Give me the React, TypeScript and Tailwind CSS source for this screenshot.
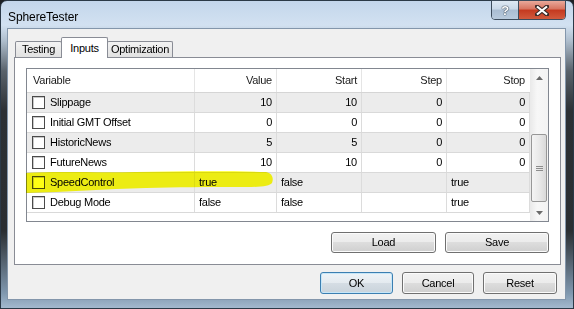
import type { ReactNode } from 'react'

type Row = {
  name: string
  value: string
  start: string
  step: string
  stop: string
  num: boolean
}

const rows: Row[] = [
  { name: 'Slippage', value: '10', start: '10', step: '0', stop: '0', num: true },
  { name: 'Initial GMT Offset', value: '0', start: '0', step: '0', stop: '0', num: true },
  { name: 'HistoricNews', value: '5', start: '5', step: '0', stop: '0', num: true },
  { name: 'FutureNews', value: '10', start: '10', step: '0', stop: '0', num: true },
  { name: 'SpeedControl', value: 'true', start: 'false', step: '', stop: 'true', num: false },
  { name: 'Debug Mode', value: 'false', start: 'false', step: '', stop: 'true', num: false },
]

const btn =
  'flex h-[21px] items-center justify-center rounded-[3px] border border-[#707070] bg-[linear-gradient(#f2f2f2,#ebebeb_50%,#dddddd_50%,#cfcfcf)] shadow-[inset_0_0_0_1px_#fbfbfb]'

function Cell({ w, right, children, last }: { w: string; right?: boolean; children?: ReactNode; last?: boolean }) {
  return (
    <div
      className={`flex h-full shrink-0 items-center ${w} ${last ? '' : 'border-r border-[#dcdcdc]'} ${
        right ? 'justify-end pr-[4px]' : 'pl-[4px]'
      }`}
    >
      {children}
    </div>
  )
}

function Checkbox() {
  return (
    <span className="block h-[13px] w-[13px] shrink-0 border border-[#4a4a4a] bg-white shadow-[inset_1px_1px_0_#c8c8c8]" />
  )
}

function TitleButtons() {
  return (
    <div className="-mt-px mr-[7px] ml-auto flex h-[20px] overflow-hidden rounded-b-[4px] border border-[#3d4c5c]">
      <div className="flex w-[27px] items-center justify-center border-r border-[#3d4c5c] bg-[linear-gradient(#dde8f3,#c9d8e8_45%,#aabdd2_50%,#b8cadd)]">
        <span className="text-[13px] leading-none font-bold text-white [text-shadow:0_0_1px_#2c3e50,0_0_1px_#2c3e50,0_0_1px_#2c3e50]">
          ?
        </span>
      </div>
      <div className="flex w-[46px] items-center justify-center bg-[linear-gradient(#e9a99b,#d7735f_45%,#c4391f_50%,#d15a3d)]">
        <svg width="14" height="11" viewBox="0 0 14 11">
          <path
            d="M2 1.5 L12 9.5 M12 1.5 L2 9.5"
            stroke="#3a2a28"
            strokeWidth="4.2"
            strokeLinecap="square"
            fill="none"
          />
          <path d="M2 1.5 L12 9.5 M12 1.5 L2 9.5" stroke="#ffffff" strokeWidth="2.2" fill="none" />
        </svg>
      </div>
    </div>
  )
}

function Scrollbar() {
  return (
    <div className="flex w-[18px] shrink-0 flex-col bg-[linear-gradient(90deg,#e9e9e9,#f7f7f7_40%,#f3f3f3)]">
      <div className="flex h-[17px] items-center justify-center">
        <svg width="7" height="4" viewBox="0 0 7 4">
          <path d="M3.5 0 L7 4 L0 4 Z" fill="#6a6a6a" />
        </svg>
      </div>
      <div className="flex-1">
        <div className="mx-[1px] mt-[48px] flex h-[68px] items-center justify-center rounded-[2px] border border-[#979797] bg-[linear-gradient(90deg,#f4f4f4,#e9e9e9_50%,#d9d9d9)]">
          <div className="flex flex-col gap-[1px]">
            <span className="block h-[1px] w-[7px] bg-[#8c8c8c]" />
            <span className="block h-[1px] w-[7px] bg-[#8c8c8c]" />
            <span className="block h-[1px] w-[7px] bg-[#8c8c8c]" />
          </div>
        </div>
      </div>
      <div className="flex h-[17px] items-center justify-center">
        <svg width="7" height="4" viewBox="0 0 7 4">
          <path d="M0 0 L7 0 L3.5 4 Z" fill="#6a6a6a" />
        </svg>
      </div>
    </div>
  )
}

function InputsGrid() {
  return (
    <div className="relative">
      <div className="flex h-[154px] border border-[#828790] bg-white">
        <div className="flex w-[503px] shrink-0 flex-col">
          {/* header */}
          <div className="flex h-[24px] shrink-0 border-b border-[#d5d5d5] text-[#1a1a1a]">
            <div className="flex h-full w-[168px] items-center border-r border-[#e5e5e5] pl-[6px]">Variable</div>
            <div className="flex h-full w-[82px] items-center justify-end border-r border-[#e5e5e5] pr-[4px]">Value</div>
            <div className="flex h-full w-[85px] items-center justify-end border-r border-[#e5e5e5] pr-[4px]">Start</div>
            <div className="flex h-full w-[85px] items-center justify-end border-r border-[#e5e5e5] pr-[4px]">Step</div>
            <div className="flex h-full w-[83px] items-center justify-end pr-[5px]">Stop</div>
          </div>
          {rows.map((r, i) => (
            <div
              key={r.name}
              className={`flex h-[20px] shrink-0 border-b border-[#d9d9d9] ${i % 2 === 0 ? 'bg-[#ececec]' : 'bg-white'}`}
            >
              <div className="flex h-full w-[168px] shrink-0 items-center gap-[5px] border-r border-[#dcdcdc] pl-[5px]">
                <Checkbox />
                <span>{r.name}</span>
              </div>
              <Cell w="w-[82px]" right={r.num}>{r.value}</Cell>
              <Cell w="w-[85px]" right={r.num}>{r.start}</Cell>
              <Cell w="w-[85px]" right={r.num}>{r.step}</Cell>
              <Cell w="w-[83px]" right={r.num}>{r.stop}</Cell>
            </div>
          ))}
        </div>
        <Scrollbar />
      </div>
      {/* highlighter mark over SpeedControl */}
      <svg className="pointer-events-none absolute top-[102px] left-0 mix-blend-multiply" width="250" height="25" viewBox="0 0 250 25">
        <path
          d="M0 3 C30 1 70 3 110 2 C160 1 210 1 240 2 C246 3 248 8 246 13 C244 16 235 17 220 17 C180 17 150 17 120 18 C80 19 40 22 0 23 Z"
          fill="#ffff14"
        />
      </svg>
    </div>
  )
}

export default function App() {
  return (
    <div className="h-[309px] w-[574px] overflow-hidden bg-[#1d2024] font-['Liberation_Sans',Arial,sans-serif] text-[11px] tracking-[-0.25px] text-black">
      <div className="flex h-full flex-col rounded-t-[7px] border border-[#2b3947] bg-[linear-gradient(180deg,#c3d6eb_0px,#d2e1f1_24px,#aebdcc_40px,#59626b_70px,#2c3034_110px,#2a2e32_230px,#7f97ae_292px,#a8bdd2_309px)]">
        {/* title bar */}
        <div className="flex h-[27px] shrink-0 items-start">
          <span className="mt-[9px] ml-[7px] text-[12px] leading-[14px] tracking-[-0.1px] text-black">SphereTester</span>
          <TitleButtons />
        </div>

        {/* client area */}
        <div className="flex flex-1 pr-[7px] pb-[8px] pl-[6px]">
          <div className="flex flex-1 flex-col border border-[#8396ab] bg-[#f0f0f0]">
            {/* tabs */}
            <div className="mt-[8px] flex h-[20px] shrink-0 items-end pl-[7px]">
              <div className="flex h-[16px] w-[47px] items-center justify-center rounded-t-[2px] border border-b-0 border-[#898c95] bg-[linear-gradient(#f3f3f3,#e1e1e1)]">
                Testing
              </div>
              <div className="relative z-10 -mb-px -ml-px flex h-[21px] w-[47px] justify-center rounded-t-[2px] border border-b-0 border-[#898c95] bg-white pt-[2px]">
                Inputs
              </div>
              <div className="-ml-px flex h-[16px] w-[66px] items-center justify-center rounded-t-[2px] border border-b-0 border-[#898c95] bg-[linear-gradient(#f3f3f3,#e1e1e1)]">
                Optimization
              </div>
            </div>

            {/* tab panel */}
            <div className="mr-[4px] ml-[6px] flex h-[208px] shrink-0 flex-col border border-[#898c95] bg-white px-[11px] pt-[10px]">
              <InputsGrid />
              <div className="mt-[10px] flex justify-end gap-[9px]">
                <button className={`${btn} w-[105px]`}>Load</button>
                <button className={`${btn} w-[104px]`}>Save</button>
              </div>
            </div>

            {/* dialog buttons */}
            <div className="mt-[7px] flex justify-end gap-[9px] pr-[8px]">
              <button className="flex h-[22px] w-[73px] items-center justify-center rounded-[3px] border border-[#3c7fb1] bg-[linear-gradient(#eef4f8,#e4eaef_50%,#d5dde4_50%,#c9d3db)] shadow-[inset_0_0_0_1px_#c6e6f8]">
                OK
              </button>
              <button className={`${btn} h-[22px] w-[72px]`}>Cancel</button>
              <button className={`${btn} h-[22px] w-[74px]`}>Reset</button>
            </div>
          </div>
        </div>
      </div>
    </div>
  )
}
